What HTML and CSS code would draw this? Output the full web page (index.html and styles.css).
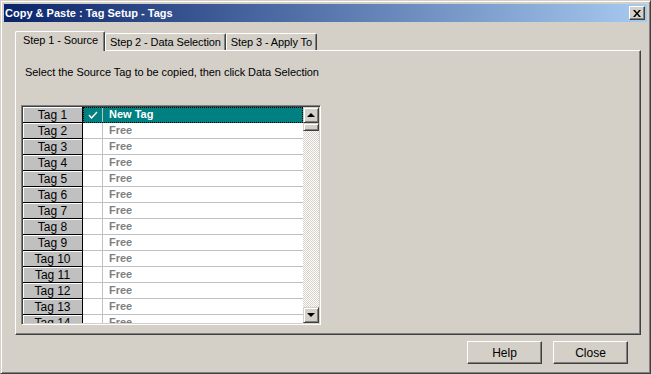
FILE: index.html
```html
<!DOCTYPE html>
<html lang="en">
<head>
    <meta charset="UTF-8">
    <title>Copy &amp; Paste : Tag Setup - Tags</title>
    <link rel="stylesheet" href="styles.css">
</head>
<body>
    <div class="window">
        <!-- title bar -->
        <div class="titlebar">
            <span class="title">Copy &amp; Paste : Tag Setup - Tags</span>
            <button class="close-x" aria-label="Close">
                <svg width="8" height="7" viewBox="0 0 8 7">
                    <path d="M0 0h2l2 2.5L6 0h2L5 3.5 8 7H6L4 4.5 2 7H0l3-3.5z" fill="#000"/>
                </svg>
            </button>
        </div>

        <div class="content">
            <!-- tabs -->
            <div class="tabs">
                <div class="tab active">Step 1 - Source</div>
                <div class="tab">Step 2 - Data Selection</div>
                <div class="tab">Step 3 - Apply To</div>
            </div>

            <div class="panel">
                <p class="hint">Select the Source Tag to be copied, then click Data Selection</p>

                <div class="grid">
                    <div class="rows">
                        <div class="row selected">
                            <div class="rowhead">Tag 1</div>
                            <div class="cells">
                                <div class="check">
                                    <svg width="10" height="8" viewBox="0 0 10 8"><path d="M1 4l2.5 3L9 1" fill="none" stroke="#fff" stroke-width="1.4"/></svg>
                                </div>
                                <div class="value">New Tag</div>
                            </div>
                        </div>
                        <div class="row"><div class="rowhead">Tag 2</div><div class="cells"><div class="check"></div><div class="value">Free</div></div></div>
                        <div class="row"><div class="rowhead">Tag 3</div><div class="cells"><div class="check"></div><div class="value">Free</div></div></div>
                        <div class="row"><div class="rowhead">Tag 4</div><div class="cells"><div class="check"></div><div class="value">Free</div></div></div>
                        <div class="row"><div class="rowhead">Tag 5</div><div class="cells"><div class="check"></div><div class="value">Free</div></div></div>
                        <div class="row"><div class="rowhead">Tag 6</div><div class="cells"><div class="check"></div><div class="value">Free</div></div></div>
                        <div class="row"><div class="rowhead">Tag 7</div><div class="cells"><div class="check"></div><div class="value">Free</div></div></div>
                        <div class="row"><div class="rowhead">Tag 8</div><div class="cells"><div class="check"></div><div class="value">Free</div></div></div>
                        <div class="row"><div class="rowhead">Tag 9</div><div class="cells"><div class="check"></div><div class="value">Free</div></div></div>
                        <div class="row"><div class="rowhead">Tag 10</div><div class="cells"><div class="check"></div><div class="value">Free</div></div></div>
                        <div class="row"><div class="rowhead">Tag 11</div><div class="cells"><div class="check"></div><div class="value">Free</div></div></div>
                        <div class="row"><div class="rowhead">Tag 12</div><div class="cells"><div class="check"></div><div class="value">Free</div></div></div>
                        <div class="row"><div class="rowhead">Tag 13</div><div class="cells"><div class="check"></div><div class="value">Free</div></div></div>
                        <div class="row"><div class="rowhead">Tag 14</div><div class="cells"><div class="check"></div><div class="value">Free</div></div></div>
                    </div>

                    <!-- vertical scrollbar -->
                    <div class="scrollbar">
                        <div class="sb-btn"><span class="arrow up"></span></div>
                        <div class="sb-thumb"></div>
                        <div class="sb-track"></div>
                        <div class="sb-btn"><span class="arrow down"></span></div>
                    </div>
                </div>
            </div>

            <div class="actions">
                <button class="btn">Help</button>
                <button class="btn">Close</button>
            </div>
        </div>
    </div>
</body>
</html>
```

FILE: styles.css
```css
body {
    margin: 0;
    padding: 0;
    font-family: "Liberation Sans", Arial, sans-serif;
    font-size: 11px;
    color: #000;
    background: #d4d0c8;
}
.window {
    width: 651px;
    height: 374px;
    box-sizing: border-box;
    background: #d4d0c8;
    border: 1px solid;
    border-color: #d4d0c8 #404040 #404040 #d4d0c8;
    box-shadow: inset 1px 1px #fff, inset -1px -1px #808080;
    padding: 3px;
    display: flex;
    flex-direction: column;
}
.titlebar {
    height: 18px;
    display: flex;
    align-items: center;
    justify-content: space-between;
    padding: 0 2px 0 1px;
    background: linear-gradient(to right, #0a246a, #a6caf0);
}
.title {
    color: #fff;
    font-weight: bold;
    font-size: 11px;
}
.close-x {
    width: 16px;
    height: 14px;
    padding: 0;
    display: flex;
    align-items: center;
    justify-content: center;
    background: #d4d0c8;
    border: 1px solid;
    border-color: #fff #404040 #404040 #fff;
    box-shadow: inset -1px -1px #808080;
}
.content {
    flex: 1;
    display: flex;
    flex-direction: column;
    padding: 9px 6px 0 11px;
}
.tabs {
    display: flex;
    align-items: flex-end;
    height: 19px;
}
.tab {
    height: 16px;
    line-height: 16px;
    padding: 0 4px;
    border-top: 1px solid #fff;
    border-left: 1px solid #fff;
    border-right: 1px solid #404040;
    box-shadow: inset -1px 0 #808080;
    border-radius: 2px 2px 0 0;
    white-space: nowrap;
    letter-spacing: -0.1px;
}
.tab.active {
    height: 19px;
    line-height: 17px;
    padding: 0 6px 0 7px;
    margin-bottom: -1px;
    position: relative;
    z-index: 1;
    background: #d4d0c8;
}
.panel {
    height: 285px;
    box-sizing: border-box;
    border: 1px solid;
    border-color: #fff #404040 #404040 #fff;
    box-shadow: inset -1px -1px #808080;
    padding: 0 0 0 5px;
}
.hint {
    margin: 14px 0 0 4px;
    line-height: 14px;
    letter-spacing: -0.05px;
}
.grid {
    margin-top: 26px;
    width: 300px;
    height: 220px;
    box-sizing: border-box;
    border: 1px solid;
    border-color: #808080 #fff #fff #808080;
    box-shadow: inset 1px 1px #404040, inset -1px -1px #d4d0c8;
    padding: 1px;
    display: flex;
    background: #fff;
}
.rows {
    flex: 1;
    overflow: hidden;
}
.row {
    display: flex;
    height: 16px;
}
.rowhead {
    width: 60px;
    box-sizing: border-box;
    background: #c0c0c0;
    border-right: 1px solid #000;
    border-bottom: 1px solid #000;
    box-shadow: inset 1px 1px #fff;
    text-align: center;
    line-height: 16px;
    font-size: 12px;
}
.cells {
    flex: 1;
    display: flex;
}
.check {
    width: 20px;
    box-sizing: border-box;
    border-right: 1px solid #c0c0c0;
    border-bottom: 1px solid #c0c0c0;
    display: flex;
    align-items: center;
    justify-content: center;
}
.value {
    flex: 1;
    box-sizing: border-box;
    border-bottom: 1px solid #c0c0c0;
    padding-left: 6px;
    line-height: 15px;
    font-weight: bold;
    color: #808080;
}
.selected .cells {
    background: #008080;
    outline: 1px dotted #000;
    outline-offset: -1px;
}
.selected .value {
    color: #fff;
    border-bottom-color: #008080;
}
.selected .check {
    border-bottom-color: #008080;
}
.scrollbar {
    width: 16px;
    display: flex;
    flex-direction: column;
}
.sb-btn,
.sb-thumb {
    box-sizing: border-box;
    background: #d4d0c8;
    border: 1px solid;
    border-color: #d4d0c8 #404040 #404040 #d4d0c8;
    box-shadow: inset 1px 1px #fff, inset -1px -1px #808080;
}
.sb-btn {
    height: 16px;
    display: flex;
    align-items: center;
    justify-content: center;
}
.sb-thumb {
    height: 8px;
}
.sb-track {
    flex: 1;
    background: repeating-conic-gradient(#fff 0 25%, #d4d0c8 0 50%) 0 0 / 2px 2px;
}
.arrow {
    width: 0;
    height: 0;
    border-left: 4px solid transparent;
    border-right: 4px solid transparent;
}
.arrow.up {
    border-bottom: 4px solid #000;
}
.arrow.down {
    border-top: 4px solid #000;
}
.actions {
    display: flex;
    justify-content: flex-end;
    gap: 11px;
    margin-top: 6px;
    padding-right: 13px;
}
.btn {
    width: 75px;
    height: 23px;
    font-family: "Liberation Sans", Arial, sans-serif;
    font-size: 12px;
    color: #000;
    background: #d4d0c8;
    border: 1px solid;
    border-color: #fff #404040 #404040 #fff;
    box-shadow: inset -1px -1px #808080;
    padding: 0;
}
```
